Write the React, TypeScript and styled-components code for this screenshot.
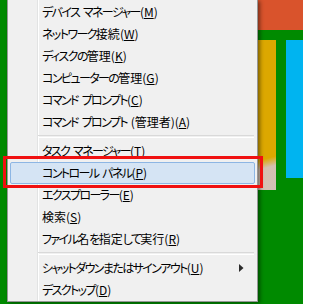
import styled, { createGlobalStyle } from "styled-components";

type MenuEntry =
    | { kind: "item"; label: string; key: string; active?: boolean; submenu?: boolean }
    | { kind: "separator" };

const entries: MenuEntry[] = [
    { kind: "item", label: "デバイス マネージャー", key: "M" },
    { kind: "item", label: "ネットワーク接続", key: "W" },
    { kind: "item", label: "ディスクの管理", key: "K" },
    { kind: "item", label: "コンピューターの管理", key: "G" },
    { kind: "item", label: "コマンド プロンプト", key: "C" },
    { kind: "item", label: "コマンド プロンプト (管理者)", key: "A" },
    { kind: "separator" },
    { kind: "item", label: "タスク マネージャー", key: "T" },
    { kind: "item", label: "コントロール パネル", key: "P", active: true },
    { kind: "item", label: "エクスプローラー", key: "E" },
    { kind: "item", label: "検索", key: "S" },
    { kind: "item", label: "ファイル名を指定して実行", key: "R" },
    { kind: "separator" },
    { kind: "item", label: "シャットダウンまたはサインアウト", key: "U", submenu: true },
    { kind: "item", label: "デスクトップ", key: "D" },
];

// kana are narrow in the menu font, so runs of them get tighter spacing
const splitKana = (text: string) =>
    text.split(/([\u3040-\u30ff]+)/).filter(Boolean).map((part, i) =>
        /[\u3040-\u30ff]/.test(part) ? <Kana key={i}>{part}</Kana> : <span key={i}>{part}</span>
    );

const GlobalStyle = createGlobalStyle`
    html, body {
        margin: 0;
        padding: 0;
        background: #ffffff;
    }
    body {
        font-family: "Noto Sans CJK JP", "Noto Sans", sans-serif;
    }
`;

const App = () => {
    return (
        <>
            <GlobalStyle />
            <Screen>
                <Desktop>
                    <Menu>
                        {entries.map((entry, i) =>
                            entry.kind === "separator" ? (
                                <Separator key={i} />
                            ) : (
                                <MenuItem key={i} $active={entry.active}>
                                    <Label>
                                        {splitKana(entry.label)}(<AccessKey>{entry.key}</AccessKey>)
                                    </Label>
                                    {entry.submenu && (
                                        <Arrow width="5" height="8" viewBox="0 0 5 8">
                                            <polygon points="0,0 4.5,4 0,8" fill="#2b2b2b" />
                                        </Arrow>
                                    )}
                                </MenuItem>
                            )
                        )}
                    </Menu>
                    <Tiles>
                        <OrangeTile />
                        <TileRow>
                            <YellowTile />
                            <CyanTile />
                        </TileRow>
                    </Tiles>
                </Desktop>
                <Annotation />
            </Screen>
        </>
    );
};

const Screen = styled.div`
    position: relative;
    display: flex;
    width: 310px;
    height: 304px;
    overflow: hidden;
    background: #ffffff;
`;

const Desktop = styled.div`
    display: flex;
    align-items: flex-start;
    width: 303px;
    height: 304px;
    padding-left: 7px;
    box-sizing: border-box;
    background: #008a00;
`;

const Menu = styled.div`
    position: relative;
    z-index: 1;
    width: 251px;
    height: 302px;
    box-sizing: border-box;
    padding: 1px 2px 2px 2px;
    border: 1px solid #979797;
    border-top: none;
    background: linear-gradient(
        to right,
        #f0f0f0 29px,
        #e2e3e3 29px,
        #e2e3e3 30px,
        #ffffff 30px,
        #ffffff 31px,
        #f0f0f0 31px
    );
    box-shadow: 2px 1px 4px rgba(0, 0, 0, 0.45);
`;

const MenuItem = styled.div<{ $active?: boolean }>`
    display: flex;
    align-items: center;
    height: 22px;
    box-sizing: border-box;
    padding: 0 10px 0 31px;
    font-size: 12px;
    color: #000000;
    border: 1px solid ${({ $active }) => ($active ? "#8db6e4" : "transparent")};
    background: ${({ $active }) => ($active ? "#d5e4f4" : "transparent")};
    border-radius: 2px;
`;

const Label = styled.span`
    font-feature-settings: "palt";
    white-space: nowrap;
    word-spacing: 1px;
    line-height: 22px;
`;

const Kana = styled.span`
    letter-spacing: -1.6px;
`;

const AccessKey = styled.span`
    text-decoration: underline;
    text-underline-offset: 1px;
`;

const Arrow = styled.svg`
    margin-left: auto;
    display: block;
`;

const Separator = styled.div`
    height: 1px;
    margin: 2px 1px 2px 28px;
    border-top: 1px solid #d9d9d9;
    border-bottom: 1px solid #ffffff;
`;

const Tiles = styled.div`
    display: flex;
    flex-direction: column;
    gap: 10px;
    width: 45px;
`;

const OrangeTile = styled.div`
    height: 30px;
    background: #d9532c;
`;

const TileRow = styled.div`
    display: flex;
    align-items: flex-start;
    justify-content: space-between;
`;

const YellowTile = styled.div`
    width: 18px;
    height: 150px;
    background: linear-gradient(165deg, #dca800 0%, #dca800 78%, #d4c0b0 84%, #d2c1b5 100%);
`;

const CyanTile = styled.div`
    width: 17px;
    height: 138px;
    background: #00b4f0;
`;

const Annotation = styled.div`
    position: absolute;
    left: 3px;
    top: 156px;
    width: 260px;
    height: 32px;
    box-sizing: border-box;
    border: 3px solid #f01010;
    z-index: 2;
`;

export default App;
